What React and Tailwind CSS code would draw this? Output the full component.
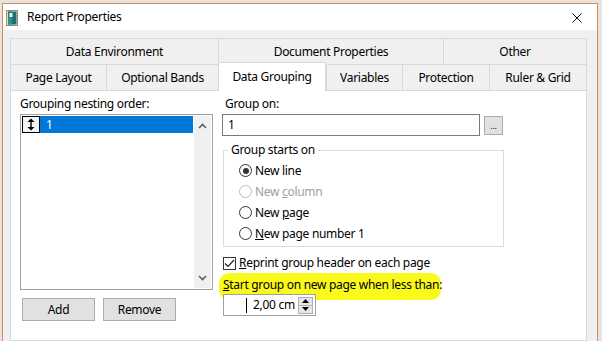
import React from 'react';

const font = "font-['Noto_Sans',sans-serif]";

const topTabs = [
  { label: 'Data Environment', w: 'w-[208px]' },
  { label: 'Document Properties', w: 'w-[225px]' },
  { label: 'Other', w: 'w-[144px] border-r' },
];

const bottomTabs = [
  { label: 'Page Layout', w: 'w-[96px]' },
  { label: 'Optional Bands', w: 'w-[112px]' },
  { label: 'Data Grouping', w: 'w-[108px]', active: true },
  { label: 'Variables', w: 'w-[76px]' },
  { label: 'Protection', w: 'w-[87px]' },
  { label: 'Ruler & Grid', w: 'w-[98px] border-r' },
];

const ReportIcon = () => (
  <svg width="12" height="16" viewBox="0 0 12 16">
    <rect x="0.5" y="0.5" width="11" height="15" fill="#e8e8e8" stroke="#8a8a8a" />
    <rect x="2" y="1.5" width="8.5" height="13" fill="#1b7070" />
    <rect x="2" y="1.5" width="4" height="13" fill="#2f9090" />
    <rect x="3" y="2.5" width="4" height="5" fill="#d8ecec" stroke="#0e4c4c" strokeWidth="0.6" />
    <path d="M1 2v1M1 4v1M1 6v1M1 8v1M1 10v1M1 12v1" stroke="#d9c21a" strokeWidth="1" />
  </svg>
);

const Radio = ({ checked, disabled }) => (
  <span
    className={`w-[13px] h-[13px] rounded-full border bg-white flex items-center justify-center shrink-0 ${
      disabled ? 'border-[#bcbcbc]' : 'border-[#333333]'
    }`}
  >
    {checked && <span className="w-[6px] h-[6px] rounded-full bg-[#333333]" />}
  </span>
);

const RadioRow = ({ checked, disabled, children }) => (
  <div className="h-[21px] flex items-center gap-[3px] pl-[15px]">
    <Radio checked={checked} disabled={disabled} />
    <span className={disabled ? 'text-[#a0a0a0]' : 'text-black'}>{children}</span>
  </div>
);

export default function App() {
  return (
    <div className={`w-[602px] h-[341px] overflow-hidden bg-[#e4e4e4] pl-[2px] pt-[3px] pr-[4px] text-[12px] leading-[16px] tracking-[-0.3px] text-black ${font}`}>
      <div className="h-[338px] flex flex-col border-l border-t border-r border-[#e2894a]">
        {/* Title bar */}
        <div className="h-[26px] bg-white flex items-center shrink-0">
          <span className="ml-[3px] mt-[1px]">
            <ReportIcon />
          </span>
          <span className="ml-[9px]">Report Properties</span>
          <svg className="ml-auto mr-[15px] mt-[1px]" width="10" height="10" viewBox="0 0 10 10">
            <path d="M0.5 0.5L9.5 9.5M9.5 0.5L0.5 9.5" stroke="#111" strokeWidth="1" />
          </svg>
        </div>

        {/* Client area */}
        <div className="flex-1 bg-[#f0f0f0] pl-[7px] pr-[10px] pt-[8px] flex flex-col min-h-0">
          <div className="flex h-[26px] shrink-0">
            {topTabs.map((t) => (
              <div
                key={t.label}
                className={`${t.w} h-[26px] border-t border-l border-[#d9d9d9] flex items-center justify-center`}
              >
                {t.label}
              </div>
            ))}
          </div>
          <div className="flex h-[26px] items-end shrink-0">
            {bottomTabs.map((t) =>
              t.active ? (
                <div
                  key={t.label}
                  className={`${t.w} h-[29px] -mb-px relative z-10 bg-white border-t border-l border-r border-[#d9d9d9] flex items-center justify-center pb-[1px]`}
                >
                  {t.label}
                </div>
              ) : (
                <div
                  key={t.label}
                  className={`${t.w} h-[26px] border-t border-l border-[#d9d9d9] flex items-center justify-center`}
                >
                  {t.label}
                </div>
              )
            )}
          </div>

          {/* Tab page */}
          <div className="flex-1 relative isolate bg-white border border-[#d9d9d9] pl-[9px] pt-[5px] flex">
            <div className="absolute -z-10 left-[208px] top-[182px] w-[222px] h-[27px] rounded-[10px] bg-[#f9f91c]" />

            {/* Left column */}
            <div className="w-[193px] flex flex-col">
              <div className="h-[16px]">Grouping nesting order:</div>
              <div className="mt-[2px] h-[176px] border border-[#a0a0a0] bg-white flex p-px">
                <div className="flex-1">
                  <div className="h-[17px] bg-[#0078d7] flex items-center">
                    <span className="w-[18px] h-[17px] border border-black bg-[#f4f4f4] flex items-center justify-center">
                      <svg width="8" height="13" viewBox="0 0 8 13">
                        <path d="M4 0.5L7.5 4H0.5Z M4 12.5L7.5 9H0.5Z" fill="#000" />
                        <rect x="3.3" y="3.5" width="1.4" height="6" fill="#000" />
                      </svg>
                    </span>
                    <span className="ml-[6px] text-white">1</span>
                  </div>
                </div>
                <div className="w-[17px] ml-px bg-[#f0f0f0] flex flex-col items-center justify-between py-[7px]">
                  <svg width="9" height="6" viewBox="0 0 9 6">
                    <path d="M1 5L4.5 1.5L8 5" stroke="#606060" strokeWidth="1.6" fill="none" />
                  </svg>
                  <svg width="9" height="6" viewBox="0 0 9 6">
                    <path d="M1 1L4.5 4.5L8 1" stroke="#606060" strokeWidth="1.6" fill="none" />
                  </svg>
                </div>
              </div>
              <div className="mt-[8px] pl-[2px] flex gap-[8px]">
                <button className="w-[73px] h-[23px] border border-[#adadad] bg-[#e1e1e1]">Add</button>
                <button className="w-[73px] h-[23px] border border-[#adadad] bg-[#e1e1e1]">Remove</button>
              </div>
            </div>

            {/* Right column */}
            <div className="ml-[9px] flex flex-col">
              <div className="h-[16px] pl-[3px]">Group on:</div>
              <div className="mt-[2px] flex items-start">
                <div className="w-[258px] h-[22px] border border-[#7a7a7a] px-[5px] flex items-center">1</div>
                <button className="ml-[4px] mt-[2px] w-[19px] h-[19px] border border-[#adadad] bg-[#e1e1e1] flex items-end justify-center pb-[4px]">
                  <span className="text-[9px] leading-[9px] text-[#202020]">...</span>
                </button>
              </div>

              <fieldset className="mt-[6px] ml-px w-[281px] border border-[#dcdcdc] pt-[2px] pb-[2px]">
                <legend className="ml-[4px] px-[3px]">Group starts on</legend>
                <RadioRow checked>New line</RadioRow>
                <RadioRow disabled>
                  New <span className="underline">c</span>olumn
                </RadioRow>
                <RadioRow>
                  New <span className="underline">p</span>age
                </RadioRow>
                <RadioRow>
                  <span className="underline">N</span>ew page number 1
                </RadioRow>
              </fieldset>

              <div className="mt-[8px] ml-px h-[16px] flex items-center gap-[3px]">
                <span className="w-[13px] h-[13px] border border-[#333333] bg-white flex items-center justify-center">
                  <svg width="11" height="9" viewBox="0 0 11 9">
                    <path d="M1 4.5L4 7.5L10 1" stroke="#222" strokeWidth="1.2" fill="none" />
                  </svg>
                </span>
                <span>
                  <span className="underline">R</span>eprint group header on each page
                </span>
              </div>

              <div className="mt-[6px] ml-px h-[16px]">
                <span className="underline">S</span>tart group on new page when less than:
              </div>

              <div className="mt-[1px] ml-px w-[93px] h-[22px] border border-[#a0a0a0] bg-white flex items-center">
                <span className="ml-[22px] w-px h-[15px] bg-black" />
                <span className="ml-[6px]">2,00 cm</span>
                <div className="ml-auto mr-[2px] w-[15px] h-[17px] border border-[#b0b0b0] bg-[#e6e6e6] flex flex-col">
                  <div className="flex-1 flex items-center justify-center border-b border-[#b0b0b0]">
                    <svg width="7" height="4" viewBox="0 0 7 4">
                      <path d="M3.5 0L7 4H0Z" fill="#000" />
                    </svg>
                  </div>
                  <div className="flex-1 flex items-center justify-center">
                    <svg width="7" height="4" viewBox="0 0 7 4">
                      <path d="M0 0H7L3.5 4Z" fill="#000" />
                    </svg>
                  </div>
                </div>
              </div>
            </div>
          </div>
        </div>
      </div>
    </div>
  );
}
